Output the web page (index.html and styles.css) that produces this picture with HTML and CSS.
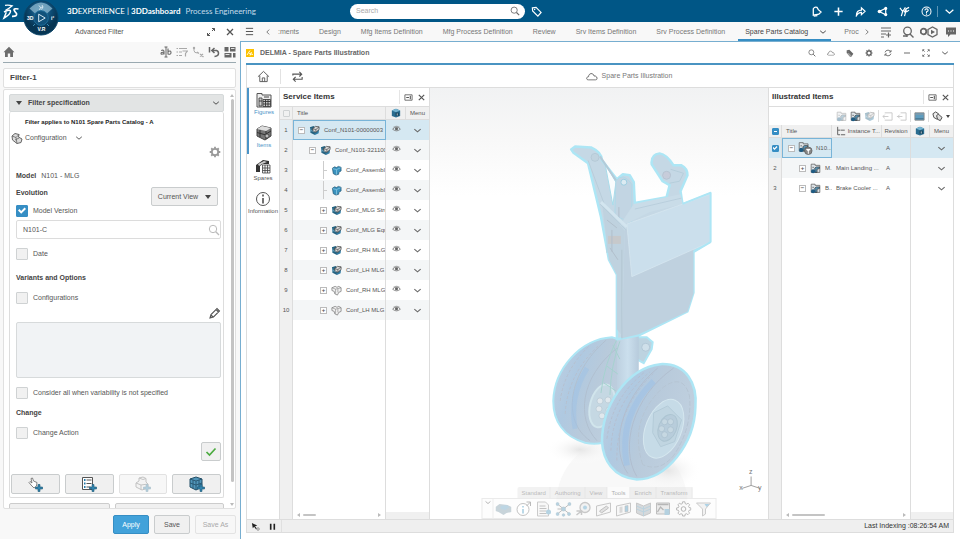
FILE: index.html
```html
<!DOCTYPE html>
<html lang="en">
<head>
<meta charset="utf-8">
<title>3DDashboard - Process Engineering</title>
<link rel="stylesheet" href="styles.css">
</head>
<body>
<svg class="defs" aria-hidden="true">
  <symbol id="chev" viewBox="0 0 10 10"><path d="M1.500 3.500 5 6.500 8.500 3.500" fill="none" stroke="currentColor" stroke-width="1.200"/></symbol>
  <symbol id="left" viewBox="0 0 10 10"><path d="M6.500 2 3.500 5l3 3" fill="none" stroke="currentColor" stroke-width="1.200"/></symbol>
  <symbol id="right" viewBox="0 0 10 10"><path d="M3.500 2l3 3-3 3" fill="none" stroke="currentColor" stroke-width="1.200"/></symbol>
  <symbol id="close" viewBox="0 0 10 10"><path d="M2 2l6 6M8 2 2 8" stroke="currentColor" stroke-width="1.300"/></symbol>
  <symbol id="search" viewBox="0 0 12 12"><circle cx="5" cy="5" r="3.700" fill="none" stroke="currentColor"/><path d="M7.800 7.800 11 11" stroke="currentColor" stroke-width="1.300"/></symbol>
  <symbol id="gear" viewBox="0 0 12 12"><circle cx="6" cy="6" r="3.200" fill="none" stroke="currentColor" stroke-width="1.800"/><path d="M6 .7v1.800M6 9.500v1.800M.7 6h1.800M9.500 6h1.800M2.250 2.250l1.300 1.300M8.450 8.450l1.300 1.300M9.750 2.250l-1.300 1.300M3.550 8.450l-1.300 1.300" stroke="currentColor" stroke-width="1.800"/></symbol>
  <symbol id="gear-thin" viewBox="0 0 16 16"><path d="M6.800 1.500h2.400l.4 2 1.400.6 1.700-1.100 1.600 1.700-1.100 1.700.5 1.300 2 .4v2.200l-2 .4-.5 1.300 1 1.700-1.600 1.600-1.700-1-1.300.5-.4 2H6.800l-.4-2-1.300-.5-1.700 1-1.600-1.600 1-1.700-.5-1.300-2-.4V8.100l2-.4.5-1.300-1-1.700L3.400 3l1.700 1.100 1.300-.6z" fill="none" stroke="currentColor" stroke-width=".8" transform="translate(.8 -.6) scale(.93)"/><circle cx="8" cy="8" r="2.300" fill="none" stroke="currentColor" stroke-width=".8"/></symbol>
  <symbol id="cloud" viewBox="0 0 14 10"><path d="M3 9C0 9 0 5.500 3 5.200 3 1 8.500.2 9.300 4.300 13.500 4 14 9 11 9z" fill="none" stroke="currentColor"/></symbol>
  <symbol id="home" viewBox="0 0 14 14"><path d="M1 7.300 7 1.500l6 5.800M3 6v6.500h8V6M5.700 12.500V8.500h2.600v4" fill="none" stroke="currentColor"/></symbol>
  <symbol id="pin" viewBox="0 0 10 8"><path d="M1 1h8v6H1z" fill="none" stroke="currentColor" stroke-width=".9"/><path d="M2.500 4h3M7 2v4" fill="none" stroke="currentColor" stroke-width="1.200"/></symbol>
  <symbol id="eye" viewBox="0 0 10 8"><path d="M.7 4.200Q5-.8 9.300 4.200 5 8 .7 4.200z" fill="none" stroke="#777" stroke-width=".9"/><circle cx="5" cy="3.800" r="1.700" fill="#666"/><path d="M1.500 2Q5-.7 8.500 2" fill="none" stroke="#888" stroke-width=".7"/></symbol>
  <symbol id="asm" viewBox="0 0 12 12"><path d="M1 2.500 5 1l1.500 1.500V11L1.500 8.500z" fill="#24617f"/><path d="M6 6.500 11 4.500 10.500 9 6.500 11z" fill="#2f7ba3"/><path d="M4 4 7 1.500 11 2v3L7.500 8 4.500 7z" fill="#d5d5d5" stroke="#444" stroke-width=".8"/><path d="M4 4l3.500 1L11 2M7.500 5v3" fill="none" stroke="#444" stroke-width=".7"/><path d="M2 3.500v4.500M1.500 5.500l4 2" stroke="#8bc4df" stroke-width=".6"/></symbol>
  <symbol id="part" viewBox="0 0 12 12"><path d="M1.500 3.500 4 2l2 .8L8 1.500l3 1v4L8.500 8v2l-3 1-3-1.500z" fill="#3a92be" stroke="#1d526f" stroke-width=".7"/><path d="M2 4l4 1 4.500-2M6 5v5.500" stroke="#8fcbe4" stroke-width=".8" fill="none"/></symbol>
  <symbol id="ghost" viewBox="0 0 12 12"><path d="M1 3 4.500 1.500l2 1L8.500 1.500 11 3v4L8.500 8 7 11 4 9.500 3.500 7 1 6z" fill="#f2f2f2" stroke="#777" stroke-width=".8"/><path d="M1 3l4 1.500L11 3M5 4.500 5 9.500M7.500 4v4" fill="none" stroke="#888" stroke-width=".7"/></symbol>
  <symbol id="cube" viewBox="0 0 12 12"><path d="M1 3 6 1l5 2v6.500L6 11.500 1 9.500z" fill="#2a6c8f"/><path d="M1 3 6 1l5 2-5 2z" fill="#75b4d1"/><path d="M5.500 5.500h4v4h-4z" fill="#16445e"/><path d="M7.500 6.500v2.500" stroke="#fff" stroke-width=".8"/></symbol>
  <symbol id="ill" viewBox="0 0 14 14"><path d="M1.500 3V1.500h5V3h6v9h-11z" fill="#dfe5e9" stroke="#555" stroke-width=".9"/><path d="M3 5.500h2M6 6.500 8 5h4v2L9 8v4H6.500z" stroke="#333" stroke-width=".8" fill="#578fae"/><circle cx="4" cy="10.500" r="2.700" fill="#1f5b82"/></symbol>
  <symbol id="plus" viewBox="0 0 8 8"><path d="M3 .5h2V3h2.500v2H5v2.500H3V5H.5V3H3z" fill="#3283ad" stroke="#1b5775" stroke-width=".6"/></symbol>
  <symbol id="funnel" viewBox="0 0 16 16"><path d="M1 2h14l-5 6v5l-3 2V8z" fill="#e7e7e7" stroke="#999"/><path d="M9 3h5l-3 3z" fill="#5da6ce"/></symbol>
</svg>

<header class="topbar">
  <svg class="ds" viewBox="0 0 18 18"><path d="M3 3.300Q7 2.800 10.200 3.800 7.500 6.200 3.500 8.300" fill="none" stroke="#fff" stroke-width="1.300"/><path d="M2 10Q8.300 6.800 8.500 9.300 8.300 12.500 2 16L4.300 10.300" fill="none" stroke="#fff" stroke-width="1.500"/><path d="M16.500 7Q12 6.300 12 7.700 12.300 9 14.500 11.500 15.500 14.500 10 14.300" fill="none" stroke="#fff" stroke-width="1.700"/></svg>
  <div class="brand"><b>3D</b>EXPERIENCE | <b>3DDashboard</b><span>Process Engineering</span></div>
  <label class="search"><input type="text" placeholder="Search" aria-label="Search"><svg viewBox="0 0 12 12"><use href="#search"/></svg></label>
  <button class="tag" aria-label="Tags"><svg viewBox="0 0 12 12"><path d="M1.500 2 5.500 1.500 11 7 7.500 11 1.800 5.500z" fill="none" stroke="#fff" stroke-width="1.300"/><circle cx="4" cy="3.800" r=".8" fill="#fff"/></svg></button>
  <nav class="actions" aria-label="Global actions">
    <button aria-label="Notifications"><svg viewBox="0 0 12 12"><path d="M2.500 10V3Q4 .5 6.500 1.500L8 4l3 2.500L8.500 9z" fill="none" stroke="#fff" stroke-width="1.400"/><path d="M3 11l4-.5" stroke="#fff" stroke-width="1.500"/></svg></button>
    <button aria-label="Add"><svg viewBox="0 0 12 12"><path d="M6 1.500v9M1.500 6h9" stroke="#fff" stroke-width="1.700"/></svg></button>
    <button aria-label="Share"><svg viewBox="0 0 12 12"><path d="M1.500 10.500Q1.500 4.500 7 4.500V2l4 3.800-4 3.700V7Q3.500 7 1.500 10.500z" fill="none" stroke="#fff" stroke-width="1.300"/></svg></button>
    <button aria-label="Network"><svg viewBox="0 0 12 12"><path d="M2.500 6 9.500 2.500V9.500z" fill="none" stroke="#fff" stroke-width="1.300"/><circle cx="2.700" cy="6" r="2" fill="#fff"/><circle cx="9.500" cy="2.600" r="1.700" fill="#fff"/><circle cx="9.500" cy="9.400" r="1.700" fill="#fff"/></svg></button>
    <button aria-label="Communities"><svg viewBox="0 0 12 12"><path d="M1 2l3 4 3-4.500M4 6 2.500 11M5.500 7 8 3l3-1.500M8 4 6 11M8 6.500l3-2" fill="none" stroke="#fff" stroke-width="1.300"/></svg></button>
    <button aria-label="Help"><svg viewBox="0 0 12 12"><circle cx="6" cy="6" r="4.900" fill="none" stroke="#fff" stroke-width="1.100"/><path d="M4.200 4.700Q4.500 3 6 3q1.800.1 1.800 1.600Q7.800 5.600 6 6.300V7.500M6 8.300v1.200" fill="none" stroke="#fff" stroke-width="1.200"/></svg></button>
    <i></i>
    <button aria-label="More"><svg viewBox="0 0 10 10"><use href="#chev"/></svg></button>
  </nav>
  <svg class="compass" viewBox="0 0 36 36">
    <defs><radialGradient id="cg" cy=".3"><stop offset="0" stop-color="#2f7ba6"/><stop offset=".6" stop-color="#0d4c75"/><stop offset="1" stop-color="#063553"/></radialGradient></defs>
    <circle cx="18" cy="18" r="17" fill="url(#cg)" stroke="#0a4468"/>
    <path d="M6.500 8.500Q18-3.500 29.500 8.500L24 13.500Q18 8 12 13.500z" fill="#8db9d0" opacity=".75"/>
    <circle cx="18" cy="18" r="7.300" fill="#11527b" stroke="#1d6c99"/>
    <path d="M15.700 14.200 22.200 18l-6.500 3.800z" fill="none" stroke="#d5e8f2"/>
    <path d="M16 5.500l1.500 2L16.500 10M19 5l1 2-1.500 2.500M17.500 7.500 20 7" stroke="#e5f1f7" fill="none" stroke-width=".8"/>
    <text x="4" y="20" class="ct">3D</text><text x="28" y="20" class="ct">i²</text><text x="14.500" y="30.500" class="ct">V.R</text>
    <path d="M10 26l2-2M26 26l-2-2" stroke="#3c8bb5"/>
  </svg>
</header>

<div class="shell">
<aside class="filter">
  <div class="f-head"><h1>Advanced Filter</h1>
    <button aria-label="Expand"><svg viewBox="0 0 10 10"><path d="M6 1.500h2.500V4M8.500 1.500 6 4M1.500 6v2.500H4M1.500 8.500 4 6" fill="none" stroke="#555"/></svg></button>
    <button aria-label="Close"><svg viewBox="0 0 10 10"><use href="#close"/></svg></button>
  </div>
  <div class="f-tools">
    <button aria-label="Home"><svg viewBox="0 0 12 12"><path d="M6 .8 11.500 6.300H10V11H7.200V7.500H4.800V11H2V6.300H.5z" fill="#6d6d6d"/></svg></button>
    <span></span>
    <button aria-label="Rename"><svg viewBox="0 0 12 12"><path d="M6 1v10M4.500 1h3M4.500 11h3" stroke="#666"/><path d="M1.200 4.500Q4 3.500 4 5.500V8.500M4 6.300Q1 6 1 7.500T4 7.600M8 2.500v6M8 5.500Q11 4 11 6.500T8 8" fill="none" stroke="#666" stroke-width="1.100"/></svg></button>
    <button aria-label="Filter list"><svg viewBox="0 0 12 12"><path d="M.5 2.500h1.500M3 2.500h8M.5 6h1.500M3 6h3M.5 9.500h1.500M3 9.500h3M6.500 5h5L9.500 7.500V10.500" fill="none" stroke="#a9a9a9" stroke-width="1.200"/></svg></button>
    <button aria-label="Tree"><svg viewBox="0 0 12 12"><path d="M2 1v3.500Q2 7 5.500 7" fill="none" stroke="#aaa"/><circle cx="2" cy="2" r="1.200" fill="#aaa"/><path d="M5 6l2 1.500M8 8l3.500 3M8 10.500 11 8" stroke="#aaa" stroke-width="1.300"/></svg></button>
    <button aria-label="Reset"><svg viewBox="0 0 12 12"><path d="M1.500 1v5.500" stroke="#666" stroke-width="1.500"/><path d="M4 4.500H8.500Q10.500 5 10.500 7.500T6.500 10.500M6.500 2 3.800 4.500 6.500 7" fill="none" stroke="#666" stroke-width="1.500"/></svg></button>
    <button aria-label="Layout"><svg viewBox="0 0 12 12"><path d="M.5 1h4v4.500h-4zM.5 7h7v4.500h-7zM6 1h5.500v4.500H6zM9 7h2.500v4.500H9z" fill="#666"/><path d="M1.500 8.500h4M7 2.500h3.500" stroke="#fff" stroke-width=".8"/></svg></button>
  </div>
  <h2 class="f-name">Filter-1</h2>
  <div class="f-box">
    <div class="f-scroll">
      <button class="acc"><b class="tri"></b><span>Filter specification</span><svg viewBox="0 0 10 10"><use href="#chev"/></svg></button>
      <div class="spec">
        <p class="applies">Filter applies to N101 Spare Parts Catalog - A</p>
        <button class="config"><svg class="ic12" viewBox="0 0 12 12"><path d="M1 4 4 1.500 8 2.500 7.500 5 11 7 10 10.500 6 11.500 1.500 8z" fill="#ddd" stroke="#666"/><path d="M1 4l4 1.500L8 2.500M5 5.500 6 11.500M4 8l4-2" fill="none" stroke="#666" stroke-width=".8"/></svg><span>Configuration</span><svg class="ic8" viewBox="0 0 10 10"><use href="#chev"/></svg></button>
        <div class="end"><button class="grey" aria-label="Settings"><svg class="ic12" viewBox="0 0 12 12"><use href="#gear"/></svg></button></div>
        <p class="model"><b>Model</b><span>N101 - MLG</span></p>
        <div class="evo">
          <div><h3>Evolution</h3><label class="chk"><input type="checkbox" checked>Model Version</label></div>
          <button class="btn view">Current View<b class="tri"></b></button>
        </div>
        <label class="field"><input type="text" value="N101-C" aria-label="Model version value"><svg class="ic12" viewBox="0 0 12 12"><use href="#search"/></svg></label>
        <label class="chk g8"><input type="checkbox">Date</label>
        <h3 class="g12">Variants and Options</h3>
        <label class="chk g7"><input type="checkbox">Configurations</label>
        <div class="end g3"><button aria-label="Edit"><svg class="ic12" viewBox="0 0 12 12"><path d="M1 11 2 7.500 8 1.500 10.500 4 4.500 10z M7 2.500 9.500 5M2 8l2 2" fill="none" stroke="#555" stroke-width="1.100"/></svg></button></div>
        <textarea class="g3" aria-label="Configuration expression" readonly></textarea>
        <label class="chk g8"><input type="checkbox">Consider all when variability is not specified</label>
        <h3 class="g8">Change</h3>
        <label class="chk g7"><input type="checkbox">Change Action</label>
        <div class="end g3"><button class="btn ok" aria-label="Validate"><svg class="ic12" viewBox="0 0 12 12"><path d="M1.500 6 4.500 9 10.500 2.500" fill="none" stroke="#4bab3f" stroke-width="1.700"/></svg></button></div>
        <div class="quad">
          <button class="btn" aria-label="Add selection"><svg viewBox="0 0 16 16"><path d="M4 9 2 6.500 3 5.500 5 7 4 2.500 5.500 2 6.500 5 10 6.500 9.500 10 7 12z" fill="#fff" stroke="#666" stroke-width=".8"/><use href="#plus" x="8" y="8" width="8" height="8"/></svg></button>
          <button class="btn" aria-label="Add list"><svg viewBox="0 0 16 16"><path d="M1.500 1.500h10v12h-10z" fill="#fff" stroke="#555"/><path d="M3 4h1.500M3 7.500h1.500M3 11h1.500" stroke="#247ba9" stroke-width="1.800"/><path d="M5.500 4h5M5.500 7.500h5M5.500 11h4" stroke="#555"/><use href="#plus" x="8" y="8" width="8" height="8"/></svg></button>
          <button class="btn" disabled aria-label="Add part"><svg viewBox="0 0 16 16"><path d="M1 7 4 5V2L8 1l3 1.500V6l2 2v4l-6 2-6-3z" fill="#eee" stroke="#666"/><path d="M1 7l5 2 7-1M6 9v5M4 2l4 1.500 3-1" fill="none" stroke="#666"/><use href="#plus" x="8" y="8" width="8" height="8"/></svg></button>
          <button class="btn" aria-label="Add volume"><svg viewBox="0 0 16 16"><path d="M1 3 7 1l6 2v8l-6 3-6-3z" fill="#5095b9" stroke="#234f67"/><path d="M1 3l6 2 6-2M7 5v9M1 7l6 2 6-2M4 4v8.500M10 4v8.500" fill="none" stroke="#234f67" stroke-width=".8"/><use href="#plus" x="8" y="8" width="8" height="8"/></svg></button>
        </div>
      </div>
      <div class="next"><i></i><i></i></div>
    </div>
    <div class="vbar"><b class="up"></b><i></i><b class="dn"></b></div>
  </div>
  <div class="f-foot"><button class="btn apply">Apply</button><button class="btn">Save</button><button class="btn wide" disabled>Save As</button></div>
</aside>

<main class="dash">
  <nav class="tabs">
    <button class="burger" aria-label="Menu"><svg viewBox="0 0 10 10"><path d="M1 1.500h8M1 5h8M1 8.500h8" stroke="#555" stroke-width="1.100"/></svg></button>
    <button class="prev" aria-label="Previous tabs"><svg viewBox="0 0 10 10"><use href="#left"/></svg></button>
    <div class="tablist">
      <a href="#" class="cut">:ments</a><a href="#">Design</a><a href="#">Mfg Items Definition</a><a href="#">Mfg Process Definition</a><a href="#">Review</a><a href="#">Srv Items Definition</a><a href="#">Srv Process Definition</a><a href="#" class="on">Spare Parts Catalog<svg viewBox="0 0 10 10"><use href="#chev"/></svg></a><a href="#" class="cut">Proc</a>
    </div>
    <button class="next-t" aria-label="Next tabs"><svg viewBox="0 0 10 10"><use href="#right"/></svg></button>
    <div class="t-icons">
      <button aria-label="Add tab"><svg viewBox="0 0 12 12"><path d="M1 2h10M1 5h10M1 8h5M8.500 6.500v5M6 9h5M1 11h3" stroke="#666" stroke-width="1.200"/></svg></button>
      <button aria-label="Find"><svg viewBox="0 0 12 12"><circle cx="5.500" cy="5" r="3.800" fill="none" stroke="#666" stroke-width="1.300"/><path d="M8 8l3.500 3.500M1 10h4M5 8v3" stroke="#666" stroke-width="1.400"/></svg></button>
      <button class="w18" aria-label="Play"><svg viewBox="0 0 18 12"><circle cx="3.500" cy="5.500" r="2.800" fill="none" stroke="#666" stroke-width="1.800"/><path d="M8 3.500 12.500 1 17 3.500v5L12.500 11 8 8.500z" fill="none" stroke="#666" stroke-width="1.300"/><path d="M11 3.700 15 6l-4 2.300z" fill="#666"/></svg></button>
      <button aria-label="Comments"><svg viewBox="0 0 12 12"><path d="M1 1.500h10v7H5.500L3 11V8.500H1z" fill="#666"/><path d="M3 5h1M5.500 5h1M8 5h1" stroke="#fff" stroke-width="1.200"/></svg></button>
    </div>
  </nav>

  <section class="widget">
    <div class="w-head">
      <svg class="logo" viewBox="0 0 8 8"><path d="M0 0h8v8H0z" fill="#fcc200"/><path d="M1 6 4 1.500M3 4.500l4 1M5.500 3 4 6.500" stroke="#fff" stroke-width=".9"/></svg>
      <h2>DELMIA - Spare Parts Illustration</h2>
      <div class="w-icons">
        <button aria-label="Search widget"><svg viewBox="0 0 12 12"><use href="#search"/></svg></button>
        <button aria-label="Cloud"><svg viewBox="0 0 14 10"><use href="#cloud"/></svg></button>
        <button aria-label="Tagger"><svg viewBox="0 0 12 12"><path d="M1 2 5 1l6 6-3 4.500H6L1 6z" fill="#666"/><path d="M2 6l5 5M3.500 6l4.500 4.500M2.500 3l1 1" stroke="#fff" stroke-width=".6"/></svg></button>
        <button aria-label="Preferences"><svg viewBox="0 0 12 12"><use href="#gear"/></svg></button>
        <button aria-label="Refresh"><svg viewBox="0 0 12 12"><path d="M1.500 5Q2.500 1.800 6 1.700q2.800 0 4 2.300M10.500 7Q9.500 10.200 6 10.300q-2.800 0-4-2.300M10.500 1.500V4.500H7.500M1.500 10.500V7.500h3" fill="none" stroke="#555" stroke-width="1.200"/></svg></button>
        <button aria-label="Minimize"><svg viewBox="0 0 12 12"><path d="M1.500 6h9" stroke="#555" stroke-width="1.300"/></svg></button>
        <button aria-label="Maximize"><svg viewBox="0 0 12 12"><path d="M1 3.500V1h2.500M8.500 1H11v2.500M11 8.500V11H8.500M3.500 11H1V8.500M1.500 1.500l2.500 2.500M10.500 1.500 8 4M10.500 10.500 8 8M1.500 10.500 4 8" fill="none" stroke="#555" stroke-width="1.100"/></svg></button>
        <button aria-label="Widget menu"><svg viewBox="0 0 10 10"><use href="#chev"/></svg></button>
      </div>
    </div>
    <div class="app">
      <div class="a-bar">
        <button aria-label="App home"><svg viewBox="0 0 14 14"><use href="#home"/></svg></button><i></i>
        <button aria-label="Swap"><svg viewBox="0 0 14 14"><path d="M2 6V4.500h9M9 2l2.500 2.500L9 7M12 7.500V10H3M5 7.500 2.500 10 5 12.500" fill="none" stroke="#555" stroke-width="1.200"/></svg></button>
        <div class="a-title"><svg viewBox="0 0 14 10"><use href="#cloud"/></svg>Spare Parts Illustration</div>
      </div>
      <div class="work">
        <nav class="rail">
          <a href="#" class="on"><svg viewBox="0 0 16 16"><path d="M1 3V1.500h5V3h9v12H1z" fill="#eee" stroke="#555"/><path d="M3 6h3v8H3zM7 7.500h7.500v7H7z" fill="#ccc" stroke="#444" stroke-width=".9"/><path d="M7 9.500h7.500M7 12h7.500M9.500 7.500v7M12 7.500v7M3 9h3M8 5h5" stroke="#333" stroke-width=".9"/></svg>Figures</a>
          <a href="#" class="on"><svg viewBox="0 0 16 16"><path d="M1 4 6 1l9 2v8l-6 4-8-4z" fill="#777" stroke="#444"/><path d="M1 4 6 1l9 2-5 3z" fill="#ddd"/><path d="M10 6v8M1 7.500l9 2.500M4 5v7M10 9l5-3" stroke="#333" fill="none"/><circle cx="11" cy="11" r="2" fill="#bbb" stroke="#333" stroke-width=".7"/></svg>Items</a>
          <a href="#"><svg viewBox="0 0 16 16"><path d="M1 7 8 2l6 1v3H8L5 8v6H1z" fill="#333"/><path d="M3 6l6-3 3 1-5 2-3 2z" fill="#ccc"/><path d="M7.500 7h7.500v8H7.500zM7.500 10H15M7.500 12.500H15M10 7v8M12.500 7v8" fill="#eee" stroke="#444" stroke-width=".8"/></svg>Spares</a>
          <a href="#"><svg viewBox="0 0 16 16"><circle cx="8" cy="8" r="6.500" fill="none" stroke="#555"/><path d="M8 3.500v2M8 7v5.500" stroke="#444" stroke-width="1.500"/></svg>Information</a>
        </nav>

        <section class="panel svc">
          <div class="p-head"><h3>Service Items</h3><i></i><button aria-label="Dock"><svg viewBox="0 0 10 8"><use href="#pin"/></svg></button><button aria-label="Close panel"><svg viewBox="0 0 10 10"><use href="#close"/></svg></button></div>
          <table>
            <colgroup><col class="c13"><col><col class="c20"><col class="c23"></colgroup>
            <thead><tr><th><input type="checkbox" aria-label="Select all"></th><th class="l">Title</th><th><svg class="ic10" viewBox="0 0 12 12"><use href="#cube"/></svg></th><th>Menu</th></tr></thead>
            <tbody>
            <tr class="sel"><td>1</td><td><div class="n l1"><b class="tg">−</b><svg viewBox="0 0 12 12"><use href="#asm"/></svg>Conf_N101-00000003</div></td><td><svg class="eye" viewBox="0 0 10 8"><use href="#eye"/></svg></td><td><svg class="ic9" viewBox="0 0 10 10"><use href="#chev"/></svg></td></tr>
            <tr><td>2</td><td><div class="n l2"><b class="tg">−</b><svg viewBox="0 0 12 12"><use href="#asm"/></svg>Conf_N101-321100</div></td><td><svg class="eye" viewBox="0 0 10 8"><use href="#eye"/></svg></td><td><svg class="ic9" viewBox="0 0 10 10"><use href="#chev"/></svg></td></tr>
            <tr><td>3</td><td><div class="n l3"><b class="tw"></b><svg viewBox="0 0 12 12"><use href="#part"/></svg>Conf_Assembl</div></td><td><svg class="eye" viewBox="0 0 10 8"><use href="#eye"/></svg></td><td><svg class="ic9" viewBox="0 0 10 10"><use href="#chev"/></svg></td></tr>
            <tr><td>4</td><td><div class="n l3"><b class="tw"></b><svg viewBox="0 0 12 12"><use href="#part"/></svg>Conf_Assembl</div></td><td><svg class="eye" viewBox="0 0 10 8"><use href="#eye"/></svg></td><td><svg class="ic9" viewBox="0 0 10 10"><use href="#chev"/></svg></td></tr>
            <tr><td>5</td><td><div class="n l3"><b class="tg">+</b><svg viewBox="0 0 12 12"><use href="#asm"/></svg>Conf_MLG Stru</div></td><td><svg class="eye" viewBox="0 0 10 8"><use href="#eye"/></svg></td><td><svg class="ic9" viewBox="0 0 10 10"><use href="#chev"/></svg></td></tr>
            <tr><td>6</td><td><div class="n l3"><b class="tg">+</b><svg viewBox="0 0 12 12"><use href="#asm"/></svg>Conf_MLG Equ</div></td><td><svg class="eye" viewBox="0 0 10 8"><use href="#eye"/></svg></td><td><svg class="ic9" viewBox="0 0 10 10"><use href="#chev"/></svg></td></tr>
            <tr><td>7</td><td><div class="n l3"><b class="tg">+</b><svg viewBox="0 0 12 12"><use href="#asm"/></svg>Conf_RH MLG</div></td><td><svg class="eye" viewBox="0 0 10 8"><use href="#eye"/></svg></td><td><svg class="ic9" viewBox="0 0 10 10"><use href="#chev"/></svg></td></tr>
            <tr><td>8</td><td><div class="n l3"><b class="tg">+</b><svg viewBox="0 0 12 12"><use href="#asm"/></svg>Conf_LH MLG</div></td><td><svg class="eye" viewBox="0 0 10 8"><use href="#eye"/></svg></td><td><svg class="ic9" viewBox="0 0 10 10"><use href="#chev"/></svg></td></tr>
            <tr><td>9</td><td><div class="n l3"><b class="tg">+</b><svg viewBox="0 0 12 12"><use href="#ghost"/></svg>Conf_RH MLG</div></td><td><svg class="eye" viewBox="0 0 10 8"><use href="#eye"/></svg></td><td><svg class="ic9" viewBox="0 0 10 10"><use href="#chev"/></svg></td></tr>
            <tr><td>10</td><td><div class="n l3"><b class="tg">+</b><svg viewBox="0 0 12 12"><use href="#ghost"/></svg>Conf_LH MLG</div></td><td><svg class="eye" viewBox="0 0 10 8"><use href="#eye"/></svg></td><td><svg class="ic9" viewBox="0 0 10 10"><use href="#chev"/></svg></td></tr>
            </tbody>
          </table>
          <div class="rest"><i></i><div class="hbar"><b class="lt"></b><u></u><b class="rt"></b></div><div class="foot"></div></div>
        </section>

        <section class="stage">
          <svg class="model3d" viewBox="429 88 340 432">
            <defs>
              <linearGradient id="tyre" x1="0" y1="0" x2="1" y2=".4"><stop offset="0" stop-color="#c2d0e0"/><stop offset=".35" stop-color="#afc9e1"/><stop offset=".6" stop-color="#b8cadb"/><stop offset="1" stop-color="#c0d0df"/></linearGradient>
              <linearGradient id="post" x1="0" x2="1"><stop offset="0" stop-color="#bdd0e0"/><stop offset=".5" stop-color="#cbdfed"/><stop offset="1" stop-color="#b7cbdc"/></linearGradient>
              <radialGradient id="shade"><stop offset="0" stop-color="#e5e5e5"/><stop offset="1" stop-color="#fff" stop-opacity="0"/></radialGradient>
            </defs>
            <circle cx="622" cy="505" r="66" fill="#f8f8f8"/>
            <ellipse cx="580" cy="451" rx="34" ry="15" fill="url(#shade)"/><ellipse cx="668" cy="472" rx="34" ry="20" fill="url(#shade)"/>
            <path d="M553 402C554 370 580 340 612 338L636 345V430L603 444Q594 446 585 444C563 438 553 422 553 402z" fill="url(#tyre)" stroke="#ade6f5" stroke-width="2"/>
            <path d="M590 442C561 422 568 374 606 341M597 442C576 420 580 378 617 349" fill="none" stroke="#b0bfd0"/>
            <path d="M560 402Q564 370 590 346M565 415Q567 376 598 347" fill="none" stroke="#b5c0cf" stroke-dasharray="3 2"/>
            <path d="M575 430Q569 398 587 369" stroke="#9ec1e6" stroke-width="5" fill="none" opacity=".5"/>
            <ellipse cx="602" cy="407" rx="12" ry="22" transform="rotate(14 602 407)" fill="#c5d8e3" stroke="#d1e5ec" stroke-width="2"/>
            <g fill="#e0e8ed" stroke="#b2c4d0" stroke-width=".6"><circle cx="600" cy="402" r="3"/><circle cx="599" cy="410" r="3"/><circle cx="602" cy="417" r="3"/><circle cx="609" cy="411" r="3"/><circle cx="608" cy="401" r="3"/></g>
            <path d="M638 338h9l6 5-1 7-8 14-9-5z" fill="#bdd3e0" stroke="#ade6f5" stroke-width="2"/><circle cx="646" cy="348" r="4" fill="#cfe0ea" stroke="#a8c0cf" stroke-width=".7"/>
            <path d="M617 334h22v62l-22 4z" fill="url(#post)"/>
            <path d="M617 340Q604 366 601 394M620 342Q611 366 610 396M613 346l7 14M607 367l11 8M604 384l12 8" fill="none" stroke="#a5d2cf"/>
            <path d="M571 149 575 146 591 147Q602 152 602 160L617 179 623 174 630 175 634 182 635 203 667 197 670 185 663 181 652 164Q651 154 660 153 667 154 674 165L682 165Q688 168 688 175L681 191 683 204 711 193V242L694 252V293L688 312 639 336 617 340 617 275 609 260 601 217 588 163 573 152z" fill="#c5d8e5" stroke="#ade6f5" stroke-width="2.500" stroke-linejoin="round"/>
            <path d="M605 163 616 182 613 205z" fill="#fafcfd" stroke="#a8dcea"/>
            <path d="M600 156 616 180" stroke="#b4cad8" stroke-width="2"/>
            <path d="M588 160 608 214 607 253" fill="none" stroke="#b8cdda"/>
            <path d="M616 181Q623 171 632 184V224L615 215z" fill="#c2d5e3" stroke="#b0d9e8"/>
            <circle cx="624" cy="182" r="3" fill="#dcebf2" stroke="#9ccde0"/><circle cx="595" cy="157" r="4" fill="#c1d3df" stroke="#b5cad7"/>
            <path d="M618 228 634 204 681 194 683 204 650 212z" fill="#c9dce8"/><path d="M635 209 682 198" stroke="#b9cfdd"/>
            <circle cx="667" cy="175" r="4" fill="#c7ccda" stroke="#b5c4d2"/><path d="M671 169 684 173 680 181 670 183" fill="none" stroke="#b5cedb"/>
            <path d="M602 203 625 231 621 335 617 330 617 275 609 260z" fill="#bfd2df"/>
            <path d="M608 236h13v8h-13z" fill="#c7c9cb"/><path d="M607 220l10 8M610 248l8 12M612 230v22M619 207v13" stroke="#b1c0cc" fill="none"/>
            <path d="M625 230 694 200V294L688 312 639 335 622 339z" fill="#bfd1df"/>
            <path d="M622 250v89" stroke="#b2c6d3"/>
            <path d="M627 224 711 194V242L632 277z" fill="#cbdfec" stroke="#d8e8f0" stroke-width=".7"/>
            <path d="M683 204 711 193V242L694 252" fill="none" stroke="#ade6f5" stroke-width="1.500"/>
            <path d="M601 202 627 227" stroke="#d3e5ef" stroke-width="3"/><path d="M600 204 626 230" stroke="#b3cad6" stroke-width=".7"/>
            <path d="M602 443C602 408 626 369 661 365 687 364 698 385 696 408 695 445 667 481 637 481 613 479 603 461 602 443z" fill="url(#tyre)" stroke="#ade6f5" stroke-width="2.500"/>
            <path d="M637 478C620 450 632 398 674 369M628 475C610 450 620 400 658 369" fill="none" stroke="#b0bdcf"/>
            <path d="M607 440Q612 399 645 373M611 452Q612 405 650 373M617 462Q616 410 655 373" fill="none" stroke="#b4bed0" stroke-dasharray="3 2"/>
            <path d="M627 467Q618 417 654 382" stroke="#9ec1e6" stroke-width="6" fill="none" opacity=".6"/>
            <path d="M643 466Q628 421 664 388 684 374 690 397 693 429 674 457 660 474 643 466z" fill="none" stroke="#b5c5d3" stroke-dasharray="5 2"/>
            <ellipse cx="664" cy="430" rx="18" ry="31" transform="rotate(22 664 430)" fill="#c6dbe7" stroke="#d5e7ef"/>
            <path d="M654 414 668 407 682 421 675 443 661 448 653 434z" fill="#c0d5e1" stroke="#b3cbd8"/>
            <ellipse cx="668" cy="429" rx="9" ry="14" transform="rotate(22 668 429)" fill="#b8cddb" stroke="#acc4d1"/>
            <g fill="#c6d8e2" stroke="#a5bccb" stroke-width=".6"><circle cx="665" cy="423" r="3"/><circle cx="671" cy="423" r="3"/><circle cx="671" cy="431" r="3"/><circle cx="665" cy="436" r="3"/><circle cx="662" cy="430" r="3"/></g>
            <path d="M752 478v9l-9 3M752 487l9 3" fill="none" stroke="#888" stroke-width=".8"/>
            <text x="750" y="476" class="ax">z</text><text x="740" y="492" class="ax">x</text><text x="759" y="492" class="ax">y</text>
          </svg>
          <div class="dock">
            <div class="d-tabs"><button>Standard</button><button>Authoring</button><button>View</button><button class="on">Tools</button><button>Enrich</button><button>Transform</button></div>
            <div class="d-bar">
              <button class="fold" aria-label="Collapse"><svg viewBox="0 0 10 10"><use href="#chev"/></svg></button>
              <button aria-label="Part"><svg viewBox="0 0 16 16"><path d="M0 6 4 3l8 1 4 2v5l-5 1-3 2-5-3-3-1z" fill="#93aab6"/><path d="M5 5l6-1 3 2-4 3-5-1z" fill="#7eaecb"/></svg></button>
              <button aria-label="Info"><svg viewBox="0 0 16 16"><circle cx="7.500" cy="8.500" r="6" fill="#fff" stroke="#888"/><path d="M7.500 5v1.500M7.500 8v4.500" stroke="#4e9bc5" stroke-width="1.500"/><path d="M11 1h4v4M15 1l-4 4" fill="none" stroke="#777"/></svg></button>
              <button aria-label="Report"><svg viewBox="0 0 16 16"><path d="M2 1h8l3 3v11H2z" fill="#f3f3f3" stroke="#999"/><path d="M4 5h6M4 7.500h7M4 10h7M4 12.500h7" stroke="#888"/><circle cx="13" cy="11" r="2.500" fill="#6da8c6"/></svg></button>
              <button aria-label="Network graph"><svg viewBox="0 0 16 16"><path d="M2 3l6 5 6-5M2 13l6-5 6 5M8 8H2" stroke="#888" fill="none"/><g fill="#78aecb" stroke="#6b98b0" stroke-width=".6"><circle cx="2" cy="3" r="1.500"/><circle cx="14" cy="3" r="1.500"/><circle cx="8" cy="8" r="2"/><circle cx="2" cy="13" r="1.500"/><circle cx="13.500" cy="13" r="1.500"/><circle cx="8" cy="14" r="1.300"/></g></svg></button>
              <button aria-label="Inspect"><svg viewBox="0 0 16 16"><circle cx="9.500" cy="6.500" r="5" fill="#eee" stroke="#999" stroke-width="1.300"/><circle cx="9.500" cy="6.500" r="2" fill="#77b3d3"/><path d="M6 10 1 14M1 10h5v4" stroke="#999" fill="none" stroke-width="1.500"/></svg></button>
              <button aria-label="Measure"><svg viewBox="0 0 16 16"><path d="M1 5l14-3v9L1 15z" fill="#f7f7f7" stroke="#999"/><path d="M4 10l7-5 2 2-7 5z" fill="#ccc" stroke="#888"/></svg></button>
              <button aria-label="Compare"><svg viewBox="0 0 16 16"><path d="M1 5l14-3v9L1 15z" fill="#f7f7f7" stroke="#999"/><path d="M4 6l3-.5v6L4 12z" fill="#bbb"/><path d="M9.500 5l3-.5v6l-3 .5z" fill="#6babce" stroke="#888" stroke-width=".6"/></svg></button>
              <button aria-label="Section"><svg viewBox="0 0 16 16"><path d="M1 2l7 3 7-3v10l-7 3-7-3z" fill="#b5bbc0" stroke="#999"/><path d="M1 5l7 3 7-3M1 8l7 3 7-3M8 5v10" fill="none" stroke="#7fb0c8"/></svg></button>
              <button aria-label="Capture"><svg viewBox="0 0 16 16"><path d="M1 2h13v11H1z" fill="#ddd" stroke="#888"/><path d="M2 3.500h11M2 11l3-5 3 3" fill="none" stroke="#777" stroke-width="1.300"/><path d="M9 8h5v6H9z" fill="#72abca"/></svg></button>
              <button aria-label="Options"><svg viewBox="0 0 16 16"><use href="#gear-thin"/></svg></button>
              <button aria-label="Filter"><svg viewBox="0 0 16 16"><use href="#funnel"/></svg></button>
            </div>
          </div>
        </section>

        <section class="panel ill">
          <div class="p-head"><h3>Illustrated Items</h3><i></i><button aria-label="Dock"><svg viewBox="0 0 10 8"><use href="#pin"/></svg></button><button aria-label="Close panel"><svg viewBox="0 0 10 10"><use href="#close"/></svg></button></div>
          <div class="p-tools">
            <button class="dim" aria-label="Insert"><svg viewBox="0 0 14 14"><use href="#ill"/></svg></button>
            <button aria-label="Insert illustrated item"><svg viewBox="0 0 14 14"><use href="#ill"/></svg></button>
            <button class="dim" aria-label="Replace"><svg viewBox="0 0 12 12"><use href="#asm"/></svg></button><i></i>
            <button class="dim" aria-label="Indent"><svg viewBox="0 0 12 12"><path d="M3 2h8v8H3M1 6h6M3 4 1 6l2 2" fill="none" stroke="#777"/></svg></button>
            <button class="dim" aria-label="Outdent"><svg viewBox="0 0 12 12"><path d="M5 2h6v8H5M1 6h6M4 4 2 6l2 2" fill="none" stroke="#777"/></svg></button><i></i>
            <button aria-label="Picture"><svg viewBox="0 0 12 12"><path d="M1 2h10v8H1z" fill="#5f9dbf" stroke="#888"/><path d="M1.500 3.500h9" stroke="#8a9aa5"/><path d="M1.500 8.500h9" stroke="#3f6c85"/></svg></button><i></i>
            <button aria-label="Edit tags"><svg viewBox="0 0 12 12"><path d="M1 3 4 1l3 2v5L5.500 9 2 7z" fill="#eee" stroke="#444"/><path d="M5 5l2-1.500 4 3.500-2 3.500L6 9z" fill="#ddd" stroke="#444"/></svg></button><b class="tri"></b>
          </div>
          <table>
            <colgroup><col class="c13"><col class="c50"><col class="c50"><col class="c29"><col class="c19"><col></colgroup>
            <thead><tr><th><input class="part" type="checkbox" aria-label="Select all"></th><th class="l">Title</th><th class="l"><svg class="ic10" viewBox="0 0 12 12"><path d="M2 1v9.500h3M2 5h3M5.500 5h5M6 10.500h5" fill="none" stroke="#666" stroke-width="1.200"/></svg> Instance T...</th><th>Revision</th><th><svg class="ic10" viewBox="0 0 12 12"><use href="#cube"/></svg></th><th>Menu</th></tr></thead>
            <tbody>
            <tr class="sel"><td><input type="checkbox" checked aria-label="Select row 1"></td><td><div class="n r1"><b class="tg">−</b><svg class="big" viewBox="0 0 16 14"><use href="#ill" width="12" height="12"/><circle cx="11" cy="10" r="4" fill="#888" stroke="#555" stroke-width=".7"/><path d="M8.500 8h5l-2 2.500V13h-1V10.500z" fill="#fff"/></svg>N10...</div></td><td></td><td class="l">A</td><td></td><td><svg class="ic9" viewBox="0 0 10 10"><use href="#chev"/></svg></td></tr>
            <tr><td>2</td><td><div class="n r2"><b class="tg">+</b><svg class="m" viewBox="0 0 14 14"><use href="#ill"/></svg>M.</div></td><td class="l">Main Landing ...</td><td class="l">A</td><td></td><td><svg class="ic9" viewBox="0 0 10 10"><use href="#chev"/></svg></td></tr>
            <tr><td>3</td><td><div class="n r2"><b class="tg">−</b><svg class="m" viewBox="0 0 14 14"><use href="#ill"/></svg>B..</div></td><td class="l">Brake Cooler ...</td><td class="l">A</td><td></td><td><svg class="ic9" viewBox="0 0 10 10"><use href="#chev"/></svg></td></tr>
            </tbody>
          </table>
          <div class="rest"><i></i><div class="hbar"><b class="lt"></b><u class="long"></u><b class="rt"></b></div><div class="foot"></div></div>
        </section>
      </div>
      <footer class="status">
        <button aria-label="Selection mode"><svg viewBox="0 0 10 10"><path d="M1 1l6 3-2.500.7 2 2.600-1 .8-2-2.700L2 7z" fill="#222"/><circle cx="7.800" cy="7.800" r="1.400" fill="none" stroke="#777" stroke-width=".8"/></svg></button>
        <button aria-label="Pause"><svg viewBox="0 0 10 10"><path d="M3 2v6.500M7 2v6.500" stroke="#222" stroke-width="1.800"/></svg></button><i></i>
        <span>Last Indexing :08:26:54 AM</span>
      </footer>
    </div>
  </section>
</main>
</div>
</body>
</html>
```
FILE: styles.css
```css
* { box-sizing: border-box; }
body {
  margin: 0;
  height: 100vh;
  display: flex;
  flex-direction: column;
  overflow: hidden;
  font: 7px/12px "Liberation Sans", Arial, sans-serif;
  color: #555;
  background: #fff;
}
h1, h2, h3, p { margin: 0; font-size: 7px; line-height: 12px; }
button { font: inherit; color: inherit; background: none; border: 0; padding: 0; margin: 0; display: flex; align-items: center; justify-content: center; flex: none; }
a { color: inherit; text-decoration: none; }
input, textarea { font: inherit; color: inherit; margin: 0; }
svg { display: block; flex: none; }
.defs { position: absolute; width: 0; height: 0; }
.ic8 { width: 8px; height: 8px; }
.ic9 { width: 9px; height: 9px; margin: auto; }
.ic10 { width: 10px; height: 10px; margin: auto; }
.ic12 { width: 12px; height: 12px; }
.tri { border: 3px solid transparent; border-top: 4px solid #444; border-bottom: 0; }

/* top bar */
.topbar { height: 22px; flex: none; position: relative; z-index: 2; display: flex; align-items: center; background: #005686; color: #fff; }
.ds { width: 18px; height: 18px; margin-left: 2px; }
.compass { position: absolute; left: 23px; top: 0; width: 36px; height: 36px; }
.ct { font: bold 5px "Liberation Sans", sans-serif; fill: #fff; }
.brand { width: 283px; margin-left: 47px; font: 8px/12px Lato, sans-serif; white-space: nowrap; }
.brand span { margin-left: 5px; color: #c6dcea; }
.search { width: 175px; height: 15px; display: flex; align-items: center; border-radius: 8px; background: #fff; padding: 0 5px 0 6px; }
.search input { flex: 1; min-width: 0; padding: 0; border: 0; outline: 0; background: none; font-size: 7px; }
.search input::placeholder { color: #aaa; opacity: 1; }
.search svg { width: 10px; height: 10px; color: #666; }
.tag { margin-left: 6px; }
.tag svg { width: 11px; height: 11px; }
.actions { margin-left: auto; display: flex; align-items: center; }
.actions button { width: 22px; height: 20px; }
.actions svg { width: 11px; height: 11px; }
.actions i { width: 1px; height: 11px; background: #5d95b5; }

.shell { flex: 1; min-height: 0; display: grid; grid-template-columns: 240px 1fr; }

/* filter panel */
.filter { display: flex; flex-direction: column; min-height: 0; background: #f8f8f8; padding-bottom: 5px; }
.f-head { height: 20px; flex: none; display: flex; align-items: center; background: #fff; padding: 0 5px 0 75px; }
.f-head h1 { flex: 1; font-weight: 400; color: #555; }
.f-head button { margin-left: 9px; }
.f-head svg { width: 10px; height: 10px; }
.f-tools { height: 21px; flex: none; margin: 0 4px 0 3px; display: flex; align-items: center; gap: 4px; border-bottom: 1px solid #9aa9b0; }
.f-tools span { flex: 1; }
.f-tools svg { width: 12px; height: 12px; }
.f-name { margin: 5px 4px 1px 3px; height: 20px; flex: none; padding: 0 6px; border: 1px solid #e0e0e0; border-radius: 2px; background: #fff; font-size: 8px; line-height: 18px; color: #444; }
.f-box { flex: 1; min-height: 0; margin: 0 4px 6px 3px; display: flex; overflow: hidden; border: 1px solid #e0e0e0; border-radius: 2px; background: #fff; }
.f-scroll { flex: 1; min-width: 0; padding: 4px 0 0 5px; }
.acc { width: 100%; height: 18px; justify-content: flex-start; padding: 0 3px 0 6px; border: 1px solid #d5d9da; border-radius: 2px; background: #e2e4e4; font-weight: 700; color: #444; }
.acc span { flex: 1; text-align: left; margin-left: 6px; }
.acc svg { width: 8px; height: 8px; }
.spec { border: 1px solid #ddd; border-top: 0; border-radius: 2px; padding: 4px 1px 3px 1px; }
.applies { margin-left: 14px; font-size: 6px; font-weight: 700; color: #222; }
.config { height: 16px; margin-top: 2px; }
.config span { margin: 0 8px 0 2px; }
.end { display: flex; justify-content: flex-end; padding-right: 1px; }
.grey { color: #999; }
.model { margin: 12px 0 5px 5px; }
.model b { margin-right: 5px; color: #444; }
.evo { display: flex; justify-content: space-between; padding-right: 4px; }
.spec h3 { margin-left: 5px; color: #444; }
.evo .chk { margin-top: 5px; }
.btn { height: 19px; border: 1px solid #c9cccd; border-radius: 2px; background: #f0f0f0; }
.view { width: 67px; gap: 7px; }
.chk { display: flex; align-items: center; height: 13px; margin-left: 5px; gap: 5px; }
input[type=checkbox] { appearance: none; position: relative; flex: none; width: 12px; height: 12px; border: 1px solid #cfd2d3; border-radius: 1px; background: #f1f1f1; }
input[type=checkbox]:checked, input[type=checkbox].part { border-color: #368ec4; background: #368ec4; }
input[type=checkbox]:checked::before { content: ""; position: absolute; inset: 1px; background: #fff; clip-path: polygon(0 50%, 18% 32%, 40% 55%, 82% 12%, 100% 30%, 40% 90%); }
input.part::before { content: ""; position: absolute; inset: 2px 1px; background: #fff; }
.field { display: flex; align-items: center; height: 19px; margin: 3px 1px 0 5px; padding: 0 0 0 6px; border: 1px solid #dcdcdc; border-radius: 2px; }
.field input { flex: 1; min-width: 0; border: 0; padding: 0; outline: 0; background: none; }
.field svg { color: #bbb; }
.spec .g3 { margin-top: 3px; }
.spec .g7 { margin-top: 7px; }
.spec .g8 { margin-top: 8px; }
.spec .g12 { margin-top: 12px; }
.spec textarea { display: block; width: 205px; height: 56px; margin-left: 5px; resize: none; border: 1px solid #d7dadb; border-radius: 2px; background: #f1f3f5; }
.ok { width: 20px; }
.quad { margin: 13px 1px 0 0; display: grid; grid-template-columns: repeat(4, 1fr); gap: 5px; }
.quad .btn { height: 20px; }
.quad svg { width: 16px; height: 16px; }
.quad .btn:disabled { border-color: #e2e2e2; background: #f7f7f7; }
.quad .btn:disabled svg { opacity: .35; }
.next { margin-top: 5px; display: grid; grid-template-columns: 101px 1fr; gap: 5px; }
.next i { height: 20px; border: 1px solid #ccc; border-radius: 2px; background: #f0f0f0; }
.vbar { width: 11px; display: flex; flex-direction: column; align-items: center; padding: 4px 0 2px 5px; }
.vbar i { width: 3px; flex: 0 1 383px; margin: 2px 0 auto; border-radius: 2px; background: #c4c4c4; }
.up, .dn { border: 2px solid transparent; border-bottom: 3px solid #bbb; border-top: 0; }
.dn { border-top: 3px solid #bbb; border-bottom: 0; }
.f-foot { display: flex; justify-content: flex-end; gap: 5px; padding-right: 4px; }
.f-foot .btn { width: 36px; }
.f-foot .wide { width: 41px; border-color: #e3e3e3; background: #f7f7f7; color: #aaa; }
.f-foot .apply { border-color: #368ec4; background: #42a2da; color: #fff; }

/* tab strip */
.dash { min-width: 0; min-height: 0; display: flex; flex-direction: column; }
.tabs { height: 20px; flex: none; display: flex; align-items: center; background: #f8f8f8; border-bottom: 1px solid #77aed0; color: #777; }
.burger { width: 19px; }
.prev { width: 18px; }
.burger svg { width: 9px; height: 9px; }
.prev svg, .next-t svg { width: 8px; height: 8px; }
.tablist { flex: 1; min-width: 0; display: flex; align-self: stretch; overflow: hidden; }
.tablist a { flex: none; margin: 0 3px; padding: 0 7px; line-height: 19px; white-space: nowrap; }
.tablist .cut:first-child { margin-left: -6px; }
.tablist .cut:last-child { margin-right: 0; padding-right: 0; }
.tablist .on { display: flex; align-items: center; gap: 11px; padding-right: 4px; color: #444; box-shadow: inset 0 -2px #368ec4; }
.tablist .on svg { width: 8px; height: 8px; }
.next-t { width: 14px; }
.t-icons { display: flex; gap: 10px; margin-left: 6px; padding-right: 3px; }
.t-icons svg { width: 12px; height: 12px; }
.t-icons .w18 { margin-right: -3px; margin-left: -4px; }
.t-icons .w18 svg { width: 18px; }

/* widget */
.widget { flex: 1; min-height: 0; display: flex; flex-direction: column; padding: 0 6px 6px 5px; border-left: 1px solid #77aed0; }
.w-head { height: 23px; flex: none; display: flex; align-items: center; border-bottom: 2px solid #4a94c2; }
.w-head h2 { flex: 1; color: #666; }
.logo { width: 8px; height: 8px; margin-right: 6px; }
.w-icons { display: flex; }
.w-icons button { width: 19px; color: #555; }
.w-icons svg { width: 8px; height: 8px; }
.app { flex: 1; min-height: 0; display: flex; flex-direction: column; border: 1px solid #ddd; border-top: 0; }
.a-bar { height: 23px; flex: none; display: flex; align-items: center; border-bottom: 1px solid #ddd; color: #777; }
.a-bar button { width: 33px; }
.a-bar button svg { width: 13px; height: 13px; color: #555; }
.a-bar i { width: 1px; height: 15px; background: #e2e2e2; }
.a-title { flex: 1; display: flex; justify-content: center; align-items: center; gap: 4px; padding-right: 9px; }
.a-title svg { width: 12px; height: 9px; color: #555; }
.work { flex: 1; min-height: 0; display: grid; grid-template-columns: 33px 150px 1fr 185px; }
.rail { border-right: 1px solid #ddd; }
.rail a { height: 33px; padding-top: 4px; display: flex; flex-direction: column; align-items: center; font-size: 6px; line-height: 9px; white-space: nowrap; color: #555; }
.rail a.on { color: #4a94c8; border-left: 2px solid #4a94c8; }
.rail svg { width: 16px; height: 16px; }

/* item panels */
.panel { min-width: 0; min-height: 0; display: flex; flex-direction: column; background: #fff; border-right: 1px solid #ddd; font-size: 6px; }
.ill { border-right: 0; border-left: 1px solid #ddd; }
.p-head { height: 19px; flex: none; display: flex; align-items: center; gap: 4px; padding: 0 3px; border-bottom: 1px solid #ddd; }
.p-head h3 { flex: 1; font-size: 8px; color: #333; }
.p-head i { width: 1px; height: 14px; background: #e5e5e5; }
.p-head svg { width: 9px; height: 9px; }
.p-tools { height: 18px; flex: none; display: flex; align-items: center; justify-content: flex-end; gap: 3px; padding-right: 3px; }
.p-tools svg { width: 11px; height: 11px; }
.p-tools i { width: 1px; height: 12px; background: #ddd; }
.p-tools .tri { border-width: 3px 2px 0; }
.dim { opacity: .4; }
table { width: 100%; table-layout: fixed; border-collapse: separate; border-spacing: 0; }
.c13 { width: 13px; } .c19 { width: 19px; } .c20 { width: 20px; } .c23 { width: 23px; } .c29 { width: 29px; } .c50 { width: 50px; }
th, td { padding: 0; text-align: center; overflow: hidden; white-space: nowrap; font-weight: 400; line-height: 12px; }
th { height: 13px; background: #f0f0f0; border-right: 1px solid #ddd; border-bottom: 1px solid #ddd; }
th:last-child { border-right: 0; }
th .ic10 { display: inline-block; vertical-align: middle; }
th.l, td.l { text-align: left; padding-left: 4px; }
td { height: 20px; }
td .ic9 { color: #666; }
tbody tr:nth-child(even) td { background: #f4f6f7; }
tbody tr td:first-child { background: #f0f0f0; border-right: 1px solid #ddd; }
tbody tr.sel td { background: #d5e8f2; }
.svc tbody tr.sel td:first-child { background: #e4edf2; }
.svc td:nth-child(2), .ill td:nth-child(4) { border-right: 1px solid #ddd; }
tbody tr.sel td:nth-child(2) { border: 1px solid #78b4d8; }
th input[type=checkbox], td input[type=checkbox] { display: block; width: 7px; height: 7px; margin: auto; }
th input[type=checkbox]:checked::before, td input[type=checkbox]:checked::before { inset: 0; }
.eye { width: 9px; height: 8px; margin: 0 auto 3px; }
.n { display: flex; align-items: center; gap: 4px; height: 18px; overflow: hidden; }
.n svg { width: 11px; height: 11px; }
.l1 { padding-left: 4px; } .l2 { padding-left: 16px; } .l3 { padding-left: 27px; }
.tg { flex: none; width: 7px; height: 7px; border: 1px solid #bbb; background: #fff; font-size: 6px; line-height: 5px; text-align: center; color: #555; }
.tw { flex: none; width: 7px; height: 18px; background: linear-gradient(#ccc, #ccc) 3px 0 / 1px 18px no-repeat, linear-gradient(#ccc, #ccc) 3px 9px / 4px 1px no-repeat; }
.n.r1 { padding-left: 5px; gap: 3px; } .n.r2 { padding-left: 17px; gap: 4px; }
.n svg.big { width: 15px; height: 14px; }
.rest { flex: 1; display: grid; grid-template-columns: 13px 1fr 43px; }
.ill .rest { grid-template-columns: 13px 1fr 42px; }
.rest > i { background: #f0f0f0; border-right: 1px solid #ddd; }
.hbar { align-self: stretch; display: flex; align-items: flex-end; padding: 0 4px 2px; border-right: 1px solid #ddd; }
.hbar u { width: 13px; height: 2px; margin: 0 auto 1px 3px; border-radius: 1px; background: #c4c4c4; }
.hbar .long { width: 33px; }
.lt, .rt { border: 2px solid transparent; border-right: 3px solid #bbb; border-left: 0; }
.rt { border-left: 3px solid #bbb; border-right: 0; }
.foot { align-self: end; height: 7px; background: #f0f0f0; }

/* 3D view */
.stage { position: relative; min-width: 0; min-height: 0; overflow: hidden; background: linear-gradient(#f1f2f3, #f8f8f8 12%, #fff 25%); }
.model3d { width: 100%; height: 100%; }
.ax { font: 7px "Liberation Sans", sans-serif; fill: #777; }
.dock { position: absolute; left: 50%; bottom: 0; transform: translateX(-50%); opacity: .5; }
.d-tabs { display: flex; width: max-content; margin-left: 36px; background: #e6e6e6; border-radius: 2px 2px 0 0; color: #777; }
.d-tabs button { height: 11px; padding: 0 4px; font-size: 6px; border-right: 1px solid #d5d5d5; }
.d-tabs .on { background: #fff; color: #666; }
.d-bar { height: 21px; display: flex; align-items: center; padding-right: 2px; border: 1px solid #d8d8d8; background: #fcfcfc; }
.d-bar button { width: 20px; }
.d-bar svg { width: 16px; height: 16px; }
.d-bar .fold { width: 11px; height: 20px; align-items: flex-start; border-right: 1px solid #ddd; }
.d-bar .fold svg { width: 7px; height: 7px; }

.status { height: 13px; flex: none; display: flex; align-items: center; padding-right: 4px; border-top: 1px solid #ddd; background: #efefef; color: #333; }
.status button { width: 17px; }
.status svg { width: 9px; height: 9px; }
.status i { width: 1px; height: 12px; background: #e0e0e0; }
.status span { margin-left: auto; }
```
